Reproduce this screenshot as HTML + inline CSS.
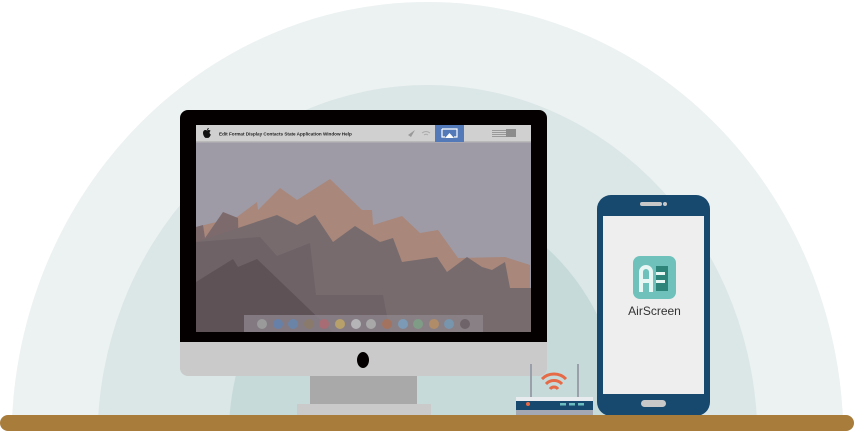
<!DOCTYPE html>
<html><head><style>
html,body{margin:0;padding:0;background:#fff;width:854px;height:431px;overflow:hidden;}
body{position:relative;font-family:"Liberation Sans",sans-serif;}
svg{display:block;}
</style></head><body>
<svg width="854" height="431" viewBox="0 0 854 431" style="position:absolute;left:0;top:0">
<ellipse cx="427.5" cy="440" rx="416" ry="438" fill="#ecf1f1"/>
<ellipse cx="427.5" cy="440" rx="330" ry="355" fill="#dbe6e6"/>
<ellipse cx="427.5" cy="440" rx="199" ry="240" fill="#c6dada"/>
<rect x="180" y="110" width="367" height="245" rx="8" fill="#050000"/>
<path d="M180 342 H547 V368 a8 8 0 0 1 -8 8 H188 a8 8 0 0 1 -8 -8 Z" fill="#cacaca"/>
<ellipse cx="363" cy="360" rx="6" ry="8" fill="#050000"/>
<rect x="310" y="376" width="107" height="28" fill="#a9a9a9"/>
<rect x="297" y="404" width="134" height="11" fill="#cacaca"/>
<svg x="196" y="125" width="335" height="207" viewBox="0 0 335 207">
<rect width="335" height="207" fill="#9e9ba7"/>
<polygon points="0,102 41,92 61,77 62,85 84,63 101,75 134,54 166,85 176,85 177,100 206,91 224,108 242,105 262,133 309,132 334,140 334,207 0,207" fill="#a9877a"/>
<polygon points="0,102 7,100 9,113 27,87 42,93 45,207 0,207" fill="#7d6a6c"/>
<polygon points="0,117 81,90 101,100 119,90 137,117 159,101 184,117 197,113 206,137 241,132 251,147 271,132 286,142 296,145 309,137 314,163 335,163 335,207 0,207" fill="#776b6e"/>
<polygon points="0,117 64,112 81,131 114,118 120,170 187,170 194,207 0,207" fill="#6e6267"/>
<polygon points="0,157 37,134 42,142 61,134 137,207 0,207" fill="#5f5257"/>
<rect width="335" height="17" fill="#d0d0d0"/>
<rect y="16" width="335" height="1.5" fill="#b9b9b9"/>
<rect x="239" width="29" height="17" fill="#5379b8"/>
<path d="M 246 4 h15 v8 h-3 M 249 12 h-3 v-8" stroke="#fff" stroke-width="1.2" fill="none"/>
<polygon points="253.5,8 258,13 249,13" fill="#fff"/>
<path d="M 212 10 l 7 -5 l -4 7 z" fill="#999"/>
<path d="M226 8 q4 -3 8 0 M228 10 q2 -1.5 4 0" stroke="#aaa" stroke-width="1" fill="none"/>
<g fill="#999"><rect x="296" y="5" width="19" height="1"/><rect x="296" y="7" width="19" height="1"/><rect x="296" y="9" width="19" height="1"/><rect x="296" y="11" width="19" height="1"/></g>
<rect x="310" y="4" width="10" height="8" fill="#8c8c8c"/>
<path d="M11 5.5 c-1.5 -1 -4 -0.5 -4 2.5 c0 2.5 2 5 3 5 c0.6 0 0.8 -0.3 1 -0.3 c0.2 0 0.4 0.3 1 0.3 c1 0 2.5 -2 2.8 -3.5 c-1.5 -0.6 -1.6 -2.8 -0.2 -3.6 c-0.9 -1.3 -2.6 -1 -3.6 -0.4 Z M11 5 c0 -1 0.7 -2 1.8 -2 c0 1 -0.8 2 -1.8 2Z" fill="#111"/>
<text x="23" y="10.5" font-size="4.6" font-weight="bold" fill="#222">Edit Format Display Contacts State Application Window Help</text>
<rect x="48" y="190" width="239" height="17" fill="#8f878e" opacity="0.75"/>
<g>
<circle cx="66" cy="199" r="5" fill="#9a9a9a"/><circle cx="82" cy="199" r="5" fill="#6780a7"/><circle cx="97" cy="199" r="5" fill="#6a84a8"/><circle cx="113" cy="199" r="5" fill="#8a7a6c"/><circle cx="128" cy="199" r="5" fill="#a86c74"/><circle cx="144" cy="199" r="5" fill="#b8a06a"/><circle cx="160" cy="199" r="5" fill="#b5b5b8"/><circle cx="175" cy="199" r="5" fill="#a8a8a8"/><circle cx="191" cy="199" r="5" fill="#a4735f"/><circle cx="207" cy="199" r="5" fill="#7c9ab5"/><circle cx="222" cy="199" r="5" fill="#7f9c86"/><circle cx="238" cy="199" r="5" fill="#b18c68"/><circle cx="253" cy="199" r="5" fill="#7795ad"/><circle cx="269" cy="199" r="5" fill="#6e6368"/>
</g>
</svg>
<rect x="530" y="364" width="2" height="34" fill="#9aa0aa"/>
<rect x="577" y="364" width="2" height="34" fill="#9aa0aa"/>
<path d="M542 379 a17 17 0 0 1 24 0 M546 384 a11 11 0 0 1 16 0 M550 389 a5 5 0 0 1 8 0" stroke="#e66a46" stroke-width="3" fill="none"/>
<rect x="516" y="397" width="77" height="6" fill="#e9ecef"/>
<rect x="516" y="401" width="77" height="10" fill="#17486e"/>
<rect x="516" y="410" width="77" height="5" fill="#a3a8b2"/>
<circle cx="528" cy="404" r="2" fill="#e66a46"/>
<g fill="#6bbcbf"><rect x="560" y="403" width="6" height="2.5"/><rect x="569" y="403" width="6" height="2.5"/><rect x="578" y="403" width="6" height="2.5"/></g>
<rect x="597" y="195" width="113" height="221" rx="14" fill="#17486e"/>
<rect x="603" y="216" width="101" height="178" fill="#eeeeee"/>
<rect x="640" y="202" width="22" height="4" rx="2" fill="#c8c8c8"/>
<circle cx="665" cy="204" r="2" fill="#c8c8c8"/>
<rect x="641" y="400" width="25" height="7" rx="3.5" fill="#c8c8c8"/>
<rect x="633" y="256" width="43" height="43" rx="7" fill="#6fc1bc"/>
<rect x="656" y="266" width="12" height="25" fill="#2e8478"/>
<g fill="#e8f6f4"><rect x="656" y="272" width="9" height="3"/><rect x="656" y="280" width="9" height="3"/></g>
<path d="M641 292 V272 a5 5 0 0 1 10 0 V292 M641 281 h10" stroke="#e8f6f4" stroke-width="4" fill="none"/>
<text x="654.5" y="315" font-size="12" fill="#333" text-anchor="middle">AirScreen</text>
<rect x="0" y="415" width="854" height="16" rx="8" fill="#a87c3b"/>
</svg>
</body></html>
